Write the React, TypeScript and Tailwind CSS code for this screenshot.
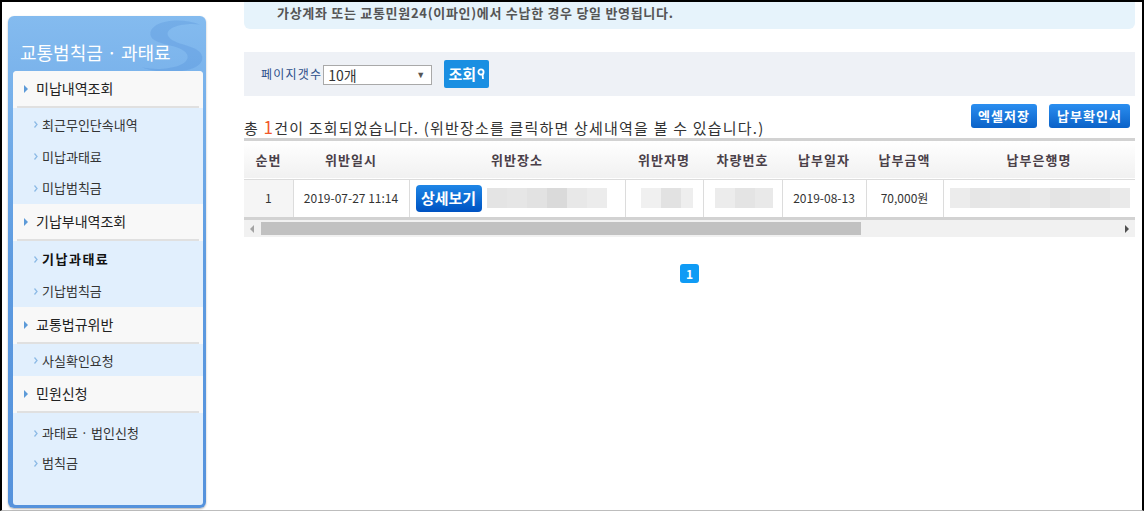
import React from "react";

const font = "font-['Noto_Sans_CJK_KR','Noto_Sans',sans-serif]";

type Group = { title: string; items: { label: string; bold?: boolean }[]; pad: string; gap: string };

const groups: Group[] = [
  {
    title: "미납내역조회",
    items: [{ label: "최근무인단속내역" }, { label: "미납과태료" }, { label: "미납범칙금" }],
    pad: "h-[96px] pt-[1px]",
    gap: "h-[32.5px]",
  },
  {
    title: "기납부내역조회",
    items: [{ label: "기납과태료", bold: true }, { label: "기납범칙금" }],
    pad: "h-[66px] pt-[2px]",
    gap: "h-[32px]",
  },
  {
    title: "교통법규위반",
    items: [{ label: "사실확인요청" }],
    pad: "h-[32px] pt-[1px]",
    gap: "h-[32px]",
  },
  {
    title: "민원신청",
    items: [{ label: "과태료 · 법인신청" }, { label: "범칙금" }],
    pad: "flex-1 pt-[5px]",
    gap: "h-[30px]",
  },
];

function Blur({ parts, h = "h-[20px]" }: { parts: string[]; h?: string }) {
  return (
    <div className={`flex ${h}`}>
      {parts.map((c, i) => (
        <div key={i} className={`h-full w-[20px] ${c}`} />
      ))}
    </div>
  );
}

function Sidebar() {
  return (
    <aside className="flex h-[492px] w-[198px] flex-col rounded-[6px] bg-gradient-to-b from-[#84bbef] via-[#5e9be0] to-[#5592dc] px-[5px] pb-[3px] pr-[3px] shadow-[0_1px_2px_rgba(0,0,0,0.3)]">
      <div className="relative h-[55px] overflow-hidden">
        <svg className="absolute right-[-8px] top-[2px]" width="80" height="56" viewBox="0 0 70 52">
          <path
            d="M62 6 C40 -2 14 4 16 16 C18 26 46 24 50 34 C54 44 30 50 8 46 C30 54 66 50 64 36 C62 24 36 26 32 16 C30 8 48 4 62 6 Z"
            fill="#3f7fd0"
            opacity="0.22"
          />
        </svg>
        <div className={`${font} relative pl-[7px] pt-[23px] text-[18px] leading-[26px] text-white`}>
          교통범칙금 · 과태료
        </div>
      </div>
      <div className="flex flex-1 flex-col overflow-hidden rounded-t-[4px] rounded-b-[3px] bg-[#e1effd]">
        {groups.map((g) => (
          <React.Fragment key={g.title}>
            <div className="bg-[#f8f8f8]">
              <div className={`${font} flex h-[35px] items-center pl-[11px] text-[14px] text-[#222]`}>
                <span className="mr-[8px] h-0 w-0 border-y-[4px] border-l-[4px] border-y-transparent border-l-[#5c9ad8]" />
                {g.title}
              </div>
              <div className="mx-[4px] h-[2px] bg-[#e0e0e0]" />
            </div>
            <div className={`${g.pad} flex flex-col`}>
              {g.items.map((it) => (
                <div
                  key={it.label}
                  className={`${font} ${g.gap} flex items-center pl-[21px] text-[13px] ${
                    it.bold ? "font-bold tracking-[1.5px] text-[#111]" : "text-[#333]"
                  }`}
                >
                  <svg className="mr-[4px]" width="4" height="7" viewBox="0 0 4 7">
                    <path d="M0.5 0.5 L3 3.5 L0.5 6.5" fill="none" stroke="#8dbbe6" strokeWidth="1.3" />
                  </svg>
                  {it.label}
                </div>
              ))}
            </div>
          </React.Fragment>
        ))}
      </div>
    </aside>
  );
}

const cols = [
  { h: "순번", w: "w-[49px]" },
  { h: "위반일시", w: "w-[116px]" },
  { h: "위반장소", w: "w-[216px]" },
  { h: "위반자명", w: "w-[78px]" },
  { h: "차량번호", w: "w-[79px]" },
  { h: "납부일자", w: "w-[84px]" },
  { h: "납부금액", w: "w-[77px]" },
  { h: "납부은행명", w: "w-[192px]" },
];

function BlueButton({ children, w }: { children: React.ReactNode; w: string }) {
  return (
    <button
      className={`${font} ${w} h-[24px] rounded-[3px] bg-gradient-to-b from-[#2a8ef0] to-[#0a62c8] text-[13px] font-bold tracking-[1px] text-white`}
    >
      {children}
    </button>
  );
}

function Main() {
  return (
    <main className="ml-[38px] w-[891px]">
      <div
        className={`${font} h-[27px] rounded-b-[6px] bg-[#e6f3fb] pl-[33px] text-[13px] font-bold leading-[22px] tracking-[0.7px] text-[#555]`}
      >
        가상계좌 또는 교통민원24(이파인)에서 수납한 경우 당일 반영됩니다.
      </div>

      <div className="mt-[23px] flex h-[44px] items-center bg-[#eef1f6] pl-[17px]">
        <span className={`${font} text-[12px] tracking-[1.2px] text-[#2d4f8a]`}>페이지갯수</span>
        <div className="ml-[1px] mt-[2px] flex h-[20px] w-[109px] items-center justify-between border border-[#a9a9a9] bg-white pl-[4px] pr-[6px]">
          <span className={`${font} text-[14px] leading-[18px] text-[#333]`}>10개</span>
          <span className="text-[9px] text-[#555]">▼</span>
        </div>
        <button className="ml-[12px] flex h-[28px] w-[45px] items-center justify-center gap-[1px] rounded-[2px] bg-[#1a8fe2]">
          <span className={`${font} text-[15px] font-bold text-white`}>조회</span>
          <svg width="8" height="12" viewBox="0 0 8 12">
            <circle cx="4" cy="4" r="2.6" fill="none" stroke="white" strokeWidth="1.8" />
            <path d="M5.5 6 L6 11" stroke="white" strokeWidth="1.8" />
          </svg>
        </button>
      </div>

      <div className="flex h-[42px] items-end justify-between pr-[5px]">
        <div className={`${font} text-[15px] leading-[20px] tracking-[1.2px] text-[#333]`}>
          총 <span className="text-[17px] text-[#f2582a]">1</span>건이 조회되었습니다. (위반장소를 클릭하면 상세내역을 볼 수 있습니다.)
        </div>
        <div className="mb-[10px] flex gap-[12px]">
          <BlueButton w="w-[66px]">엑셀저장</BlueButton>
          <BlueButton w="w-[81px]">납부확인서</BlueButton>
        </div>
      </div>

      <div className="border-t-[3px] border-[#d2d2d2]">
        <table className="w-full table-fixed border-collapse">
          <colgroup>
            {cols.map((c) => (
              <col key={c.h} className={c.w} />
            ))}
          </colgroup>
          <thead>
            <tr className="h-[38px] border-b border-[#dcdcdc] bg-gradient-to-b from-white to-[#f1f1f1]">
              {cols.map((c) => (
                <th key={c.h} className={`${font} text-[13px] font-bold tracking-[1px] text-[#4a4048]`}>
                  {c.h}
                </th>
              ))}
            </tr>
          </thead>
          <tbody>
            <tr className={`${font} h-[38px] text-[12px] text-[#333]`}>
              <td className="border-r border-[#dcdcdc] bg-[#f5f5f5] text-center">1</td>
              <td className="border-r border-[#dcdcdc] text-center">2019-07-27 11:14</td>
              <td className="border-r border-[#dcdcdc] px-[6px]">
                <div className="flex items-center gap-[5px]">
                  <span className="flex h-[27px] w-[66px] items-center justify-center rounded-[4px] bg-gradient-to-b from-[#1f86e6] to-[#0052c2] text-[15px] font-bold text-white">
                    상세보기
                  </span>
                  <Blur parts={["bg-[#e4e4e4]", "bg-[#e6e6e6]", "bg-[#e2e2e2]", "bg-[#dadada]", "bg-[#e8e8e8]", "bg-[#ececec]"]} />
                </div>
              </td>
              <td className="border-r border-[#dcdcdc] pl-[15px]">
                <div className="flex">
                  <div className="h-[20px] w-[20px] bg-[#f0f0f0]" />
                  <div className="h-[20px] w-[20px] bg-[#e2e2e2]" />
                  <div className="h-[20px] w-[12px] bg-[#eeeeee]" />
                </div>
              </td>
              <td className="border-r border-[#dcdcdc] pl-[11px]">
                <div className="flex">
                  <div className="h-[20px] w-[20px] bg-[#ececec]" />
                  <div className="h-[20px] w-[20px] bg-[#e4e4e4]" />
                  <div className="h-[20px] w-[18px] bg-[#e9e9e9]" />
                </div>
              </td>
              <td className="border-r border-[#dcdcdc] text-center">2019-08-13</td>
              <td className="border-r border-[#dcdcdc] text-center">70,000원</td>
              <td className="pl-[6px]">
                <Blur
                  parts={[
                    "bg-[#ececec]",
                    "bg-[#e6e6e6]",
                    "bg-[#e8e8e8]",
                    "bg-[#e6e6e6]",
                    "bg-[#e9e9e9]",
                    "bg-[#e4e4e4]",
                    "bg-[#e7e7e7]",
                    "bg-[#e6e6e6]",
                    "bg-[#eaeaea]",
                  ]}
                />
              </td>
            </tr>
          </tbody>
        </table>
      </div>
      <div className="border-t-[3px] border-[#d2d2d2]" />
      <div className="flex h-[17px] items-center bg-[#f1f1f1]">
        <span className="ml-[6px] h-0 w-0 border-y-[4px] border-r-[4px] border-y-transparent border-r-[#a3a3a3]" />
        <div className="ml-[7px] h-[13px] w-[600px] bg-[#c1c1c1]" />
        <span className="ml-auto mr-[6px] h-0 w-0 border-y-[4px] border-l-[4px] border-y-transparent border-l-[#505050]" />
      </div>

      <div className="mt-[27px] flex justify-center">
        <span className={`${font} flex h-[19px] w-[19px] items-center justify-center rounded-[3px] bg-[#0f9bf5] text-[12px] font-bold text-white`}>
          1
        </span>
      </div>
    </main>
  );
}

export default function App() {
  return (
    <div className="h-[516px] w-[1145px] overflow-hidden bg-white">
      <div className="flex h-[511px] w-[1144px] border-l-2 border-r-2 border-t-2 border-b border-l-black border-r-black border-t-black border-b-[#bdbdbd] pl-[6px]">
        <div className="pt-[14px]">
          <Sidebar />
        </div>
        <Main />
      </div>
    </div>
  );
}
